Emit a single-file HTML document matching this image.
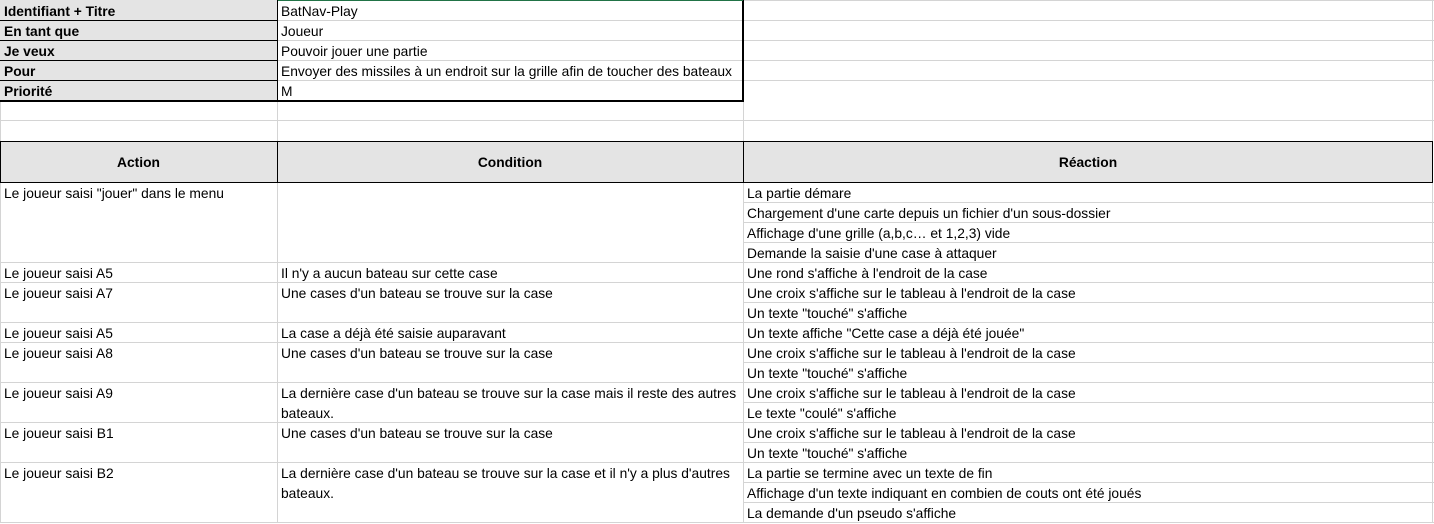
<!DOCTYPE html>
<html><head><meta charset="utf-8"><style>
body{margin:0;width:1434px;height:523px;background:#fff;position:relative;overflow:hidden;font-family:"Liberation Sans",sans-serif;font-size:13.8px;color:#000}
div{position:absolute;box-sizing:border-box}
.h{height:1px;background:#d4d4d4}
.v{width:1px;background:#d4d4d4}
.k{background:#000}
.t{line-height:20px;white-space:nowrap;padding-left:4px}
.b{font-weight:bold}
</style></head><body>
<div class="h" style="left:0;top:0;width:1434px"></div>
<div class="h" style="left:278px;top:20px;width:1156px"></div>
<div class="h" style="left:278px;top:40px;width:1156px"></div>
<div class="h" style="left:278px;top:60px;width:1156px"></div>
<div class="h" style="left:278px;top:80px;width:1156px"></div>
<div class="h" style="left:0;top:120px;width:1434px"></div>
<div class="v" style="left:0;top:0;height:523px"></div>
<div class="v" style="left:1432px;top:0;height:523px"></div>
<div class="v" style="left:277px;top:100px;height:41px"></div>
<div class="v" style="left:743px;top:100px;height:41px"></div>
<div style="left:0;top:0;width:278px;height:100px;background:#e4e4e4"></div>
<div class="k" style="left:0;top:20px;width:278px;height:1px"></div>
<div class="k" style="left:0;top:40px;width:278px;height:1px"></div>
<div class="k" style="left:0;top:60px;width:278px;height:1px"></div>
<div class="k" style="left:0;top:80px;width:278px;height:1px"></div>
<div class="k" style="left:0;top:100px;width:744px;height:2px"></div>
<div class="k" style="left:277px;top:0;width:1px;height:100px"></div>
<div class="k" style="left:742px;top:0;width:2px;height:102px"></div>
<div style="left:278px;top:0;width:465px;height:1px;background:#217346"></div>
<div class="t b" style="left:0;top:2px">Identifiant + Titre</div>
<div class="t b" style="left:0;top:22px">En tant que</div>
<div class="t b" style="left:0;top:42px">Je veux</div>
<div class="t b" style="left:0;top:62px">Pour</div>
<div class="t b" style="left:0;top:82px">Priorité</div>
<div class="t" style="left:277px;top:2px">BatNav-Play</div>
<div class="t" style="left:277px;top:22px">Joueur</div>
<div class="t" style="left:277px;top:42px">Pouvoir jouer une partie</div>
<div class="t" style="left:277px;top:62px">Envoyer des missiles à un endroit sur la grille afin de toucher des bateaux</div>
<div class="t" style="left:277px;top:82px">M</div>
<div style="left:0;top:141px;width:1433px;height:42px;background:#e4e4e4;border:1px solid #000"></div>
<div class="k" style="left:277px;top:141px;width:1px;height:42px"></div>
<div class="k" style="left:743px;top:141px;width:1px;height:42px"></div>
<div class="b" style="left:0;top:153px;width:277px;text-align:center;line-height:20px">Action</div>
<div class="b" style="left:277px;top:153px;width:466px;text-align:center;line-height:20px">Condition</div>
<div class="b" style="left:743px;top:153px;width:690px;text-align:center;line-height:20px">Réaction</div>
<div class="v" style="left:277px;top:183px;height:340px"></div>
<div class="v" style="left:743px;top:183px;height:340px"></div>
<div class="h" style="left:743px;top:202px;width:691px"></div>
<div class="h" style="left:743px;top:222px;width:691px"></div>
<div class="h" style="left:743px;top:242px;width:691px"></div>
<div class="h" style="left:0;top:262px;width:1434px"></div>
<div class="h" style="left:0;top:282px;width:1434px"></div>
<div class="h" style="left:743px;top:302px;width:691px"></div>
<div class="h" style="left:0;top:322px;width:1434px"></div>
<div class="h" style="left:0;top:342px;width:1434px"></div>
<div class="h" style="left:743px;top:362px;width:691px"></div>
<div class="h" style="left:0;top:382px;width:1434px"></div>
<div class="h" style="left:743px;top:402px;width:691px"></div>
<div class="h" style="left:0;top:422px;width:1434px"></div>
<div class="h" style="left:743px;top:442px;width:691px"></div>
<div class="h" style="left:0;top:462px;width:1434px"></div>
<div class="h" style="left:743px;top:482px;width:691px"></div>
<div class="h" style="left:743px;top:502px;width:691px"></div>
<div class="h" style="left:0;top:522px;width:1434px"></div>
<div class="t" style="left:0;top:184px">Le joueur saisi "jouer" dans le menu</div>
<div class="t" style="left:0;top:264px">Le joueur saisi A5</div>
<div class="t" style="left:0;top:284px">Le joueur saisi A7</div>
<div class="t" style="left:0;top:324px">Le joueur saisi A5</div>
<div class="t" style="left:0;top:344px">Le joueur saisi A8</div>
<div class="t" style="left:0;top:384px">Le joueur saisi A9</div>
<div class="t" style="left:0;top:424px">Le joueur saisi B1</div>
<div class="t" style="left:0;top:464px">Le joueur saisi B2</div>
<div class="t" style="left:277px;top:264px">Il n'y a aucun bateau sur cette case</div>
<div class="t" style="left:277px;top:284px">Une cases d'un bateau se trouve sur la case</div>
<div class="t" style="left:277px;top:324px">La case a déjà été saisie auparavant</div>
<div class="t" style="left:277px;top:344px">Une cases d'un bateau se trouve sur la case</div>
<div class="t" style="left:277px;top:384px">La dernière case d'un bateau se trouve sur la case mais il reste des autres</div>
<div class="t" style="left:277px;top:404px">bateaux.</div>
<div class="t" style="left:277px;top:424px">Une cases d'un bateau se trouve sur la case</div>
<div class="t" style="left:277px;top:464px">La dernière case d'un bateau se trouve sur la case et il n'y a plus d'autres</div>
<div class="t" style="left:277px;top:484px">bateaux.</div>
<div class="t" style="left:743px;top:184px">La partie démare</div>
<div class="t" style="left:743px;top:204px">Chargement d'une carte depuis un fichier d'un sous-dossier</div>
<div class="t" style="left:743px;top:224px">Affichage d'une grille (a,b,c… et 1,2,3) vide</div>
<div class="t" style="left:743px;top:244px">Demande la saisie d'une case à attaquer</div>
<div class="t" style="left:743px;top:264px">Une rond s'affiche à l'endroit de la case</div>
<div class="t" style="left:743px;top:284px">Une croix s'affiche sur le tableau à l'endroit de la case</div>
<div class="t" style="left:743px;top:304px">Un texte "touché" s'affiche</div>
<div class="t" style="left:743px;top:324px">Un texte affiche "Cette case a déjà été jouée"</div>
<div class="t" style="left:743px;top:344px">Une croix s'affiche sur le tableau à l'endroit de la case</div>
<div class="t" style="left:743px;top:364px">Un texte "touché" s'affiche</div>
<div class="t" style="left:743px;top:384px">Une croix s'affiche sur le tableau à l'endroit de la case</div>
<div class="t" style="left:743px;top:404px">Le texte "coulé" s'affiche</div>
<div class="t" style="left:743px;top:424px">Une croix s'affiche sur le tableau à l'endroit de la case</div>
<div class="t" style="left:743px;top:444px">Un texte "touché" s'affiche</div>
<div class="t" style="left:743px;top:464px">La partie se termine avec un texte de fin</div>
<div class="t" style="left:743px;top:484px">Affichage d'un texte indiquant en combien de couts ont été joués</div>
<div class="t" style="left:743px;top:504px">La demande d'un pseudo s'affiche</div>
</body></html>
